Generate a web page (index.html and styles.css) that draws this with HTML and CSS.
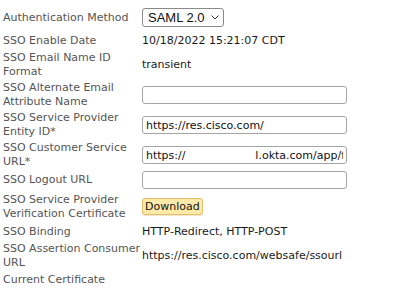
FILE: index.html
```html
<!DOCTYPE html>
<html lang="en">
<head>
    <meta charset="UTF-8">
    <title>SSO Settings</title>
    <link rel="stylesheet" href="styles.css">
</head>
<body>
    <table class="settings">
        <tr class="row-select">
            <td class="label">Authentication Method</td>
            <td class="value">
                <span class="select">SAML 2.0
                    <svg class="chevron" width="8" height="5" viewBox="0 0 8 5"><path d="M0.5 0.5 L4 4 L7.5 0.5" fill="none" stroke="#333" stroke-width="1"/></svg>
                </span>
            </td>
        </tr>
        <tr>
            <td class="label">SSO Enable Date</td>
            <td class="value">10/18/2022 15:21:07 CDT</td>
        </tr>
        <tr>
            <td class="label">SSO Email Name ID<br>Format</td>
            <td class="value">transient</td>
        </tr>
        <tr class="row-input">
            <td class="label">SSO Alternate Email<br>Attribute Name</td>
            <td class="value"><input class="field" type="text" value=""></td>
        </tr>
        <tr class="row-input">
            <td class="label">SSO Service Provider<br>Entity ID*</td>
            <td class="value"><input class="field" type="text" value="https://res.cisco.com/"></td>
        </tr>
        <tr class="row-input">
            <td class="label">SSO Customer Service<br>URL*</td>
            <td class="value"><input class="field" type="text" value="https://                    l.okta.com/app/f"></td>
        </tr>
        <tr class="row-input">
            <td class="label">SSO Logout URL</td>
            <td class="value"><input class="field" type="text" value=""></td>
        </tr>
        <tr class="row-button">
            <td class="label">SSO Service Provider<br>Verification Certificate</td>
            <td class="value"><button class="download">Download</button></td>
        </tr>
        <tr>
            <td class="label">SSO Binding</td>
            <td class="value">HTTP-Redirect, HTTP-POST</td>
        </tr>
        <tr>
            <td class="label">SSO Assertion Consumer<br>URL</td>
            <td class="value">https://res.cisco.com/websafe/ssourl</td>
        </tr>
        <tr>
            <td class="label">Current Certificate</td>
            <td class="value"></td>
        </tr>
    </table>
</body>
</html>
```

FILE: styles.css
```css
body {
    margin: 0;
    padding: 7px 0 0 3px;
    background: #fff;
    font-family: "DejaVu Sans", Verdana, sans-serif;
    font-size: 11px;
    line-height: 14px;
}
.settings {
    border-collapse: collapse;
}
.settings td {
    padding: 1.5px 0;
    vertical-align: middle;
}
.row-select td {
    padding: 1px 0 5px;
}
.row-input td {
    padding: 1px 0;
}
.row-button td {
    padding: 2.5px 0;
}
.label {
    width: 139px;
    color: #555;
}
.value {
    color: #1a1a1a;
}
.select {
    display: inline-flex;
    align-items: center;
    gap: 6px;
    height: 19px;
    padding: 0 4px 0 5px;
    border: 1px solid #8a8a8a;
    border-radius: 3px;
    font-family: "Liberation Sans", Arial, sans-serif;
    font-size: 13px;
    color: #111;
    box-sizing: border-box;
}
.field {
    display: block;
    width: 205px;
    height: 18px;
    box-sizing: border-box;
    margin: 0;
    padding: 0 3px;
    border: 1px solid #a5a5a5;
    border-radius: 3px;
    font-family: "DejaVu Sans", Verdana, sans-serif;
    font-size: 11px;
    color: #111;
    background: #fff;
}
.download {
    height: 17px;
    padding: 0 2px;
    margin: 0;
    border: 1px solid #e2bf6a;
    border-radius: 3px;
    background: #fdeaa8;
    box-shadow: 0 1px 1px rgba(200, 160, 60, 0.3);
    font-family: "DejaVu Sans", Verdana, sans-serif;
    font-size: 11px;
    line-height: 14px;
    color: #111;
}
```
